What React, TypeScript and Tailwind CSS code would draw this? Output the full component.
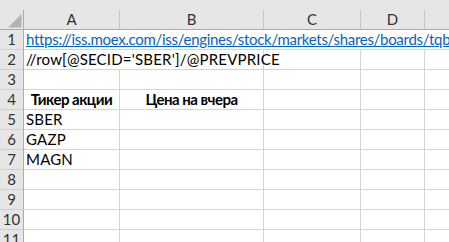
import React from "react";

const font = { fontFamily: "Lato, 'Liberation Sans', sans-serif" };

function RowHeader({ n }: { n: number }) {
  return (
    <div className="w-[24px] shrink-0 bg-[#e6e6e6] border-r border-r-[#ababab] border-b border-b-[#cfcfcf] flex items-center justify-center text-[#333] leading-[19px]">
      {n}
    </div>
  );
}

function Cell({ w, children, className = "" }: { w: string; children?: React.ReactNode; className?: string }) {
  return (
    <div className={`${w} shrink-0 border-r border-b border-[#d4d4d4] leading-[19px] whitespace-nowrap overflow-visible ${className}`}>
      {children}
    </div>
  );
}

function StdRow({ n, a, b, bold = false, center = false }: { n: number; a?: string; b?: string; bold?: boolean; center?: boolean }) {
  const cls = `${bold ? "font-bold tracking-[-0.5px]" : "tracking-[0.2px]"} ${center ? "text-center" : "pl-[2px]"}`;
  return (
    <div className="flex h-[20px]">
      <RowHeader n={n} />
      <Cell w="w-[96px]" className={cls}>{a}</Cell>
      <Cell w="w-[144px]" className={cls}>{b}</Cell>
      <Cell w="w-[97px]" />
      <Cell w="w-[64px]" />
      <div className="flex-1 border-b border-[#d4d4d4]" />
    </div>
  );
}

export default function App() {
  return (
    <div className="w-[449px] h-[242px] overflow-hidden bg-white text-[15px] text-black" style={font}>
      {/* column header */}
      <div className="h-[30px] bg-[#e6e6e6] flex flex-col">
        <div className="h-[10px]" />
        <div className="flex h-[20px] border-b border-[#ababab] text-[#333] leading-[19px]">
          <div className="w-[24px] shrink-0 border-r border-[#ababab]">
            <svg width="23" height="19" viewBox="0 0 23 19">
              <polygon points="8,17.5 21.5,17.5 21.5,4" fill="#b4b4b4" />
            </svg>
          </div>
          <div className="w-[96px] shrink-0 border-r border-[#c6c6c6] text-center">A</div>
          <div className="w-[144px] shrink-0 border-r border-[#c6c6c6] text-center">B</div>
          <div className="w-[97px] shrink-0 border-r border-[#c6c6c6] text-center">C</div>
          <div className="w-[64px] shrink-0 border-r border-[#c6c6c6] text-center">D</div>
          <div className="flex-1" />
        </div>
      </div>

      {/* row 1 */}
      <div className="flex h-[20px]">
        <RowHeader n={1} />
        <div className="flex-1 border-b border-[#d4d4d4] leading-[19px] whitespace-nowrap overflow-hidden pl-[2px] tracking-[-0.3px]">
          <span className="text-[#0563c1] underline">https://iss.moex.com/iss/engines/stock/markets/shares/boards/tqbr/securities.xml</span>
        </div>
      </div>

      {/* row 2 */}
      <div className="flex h-[20px]">
        <RowHeader n={2} />
        <Cell w="w-[240px]" className="pl-[2px] tracking-[0.2px]">//row[@SECID='SBER']/@PREVPRICE</Cell>
        <Cell w="w-[97px]" />
        <Cell w="w-[64px]" />
        <div className="flex-1 border-b border-[#d4d4d4]" />
      </div>

      <StdRow n={3} />
      <StdRow n={4} a="Тикер акции" b="Цена на вчера" bold center />
      <StdRow n={5} a="SBER" />
      <StdRow n={6} a="GAZP" />
      <StdRow n={7} a="MAGN" />
      <StdRow n={8} />
      <StdRow n={9} />
      <StdRow n={10} />
      <StdRow n={11} />
    </div>
  );
}
